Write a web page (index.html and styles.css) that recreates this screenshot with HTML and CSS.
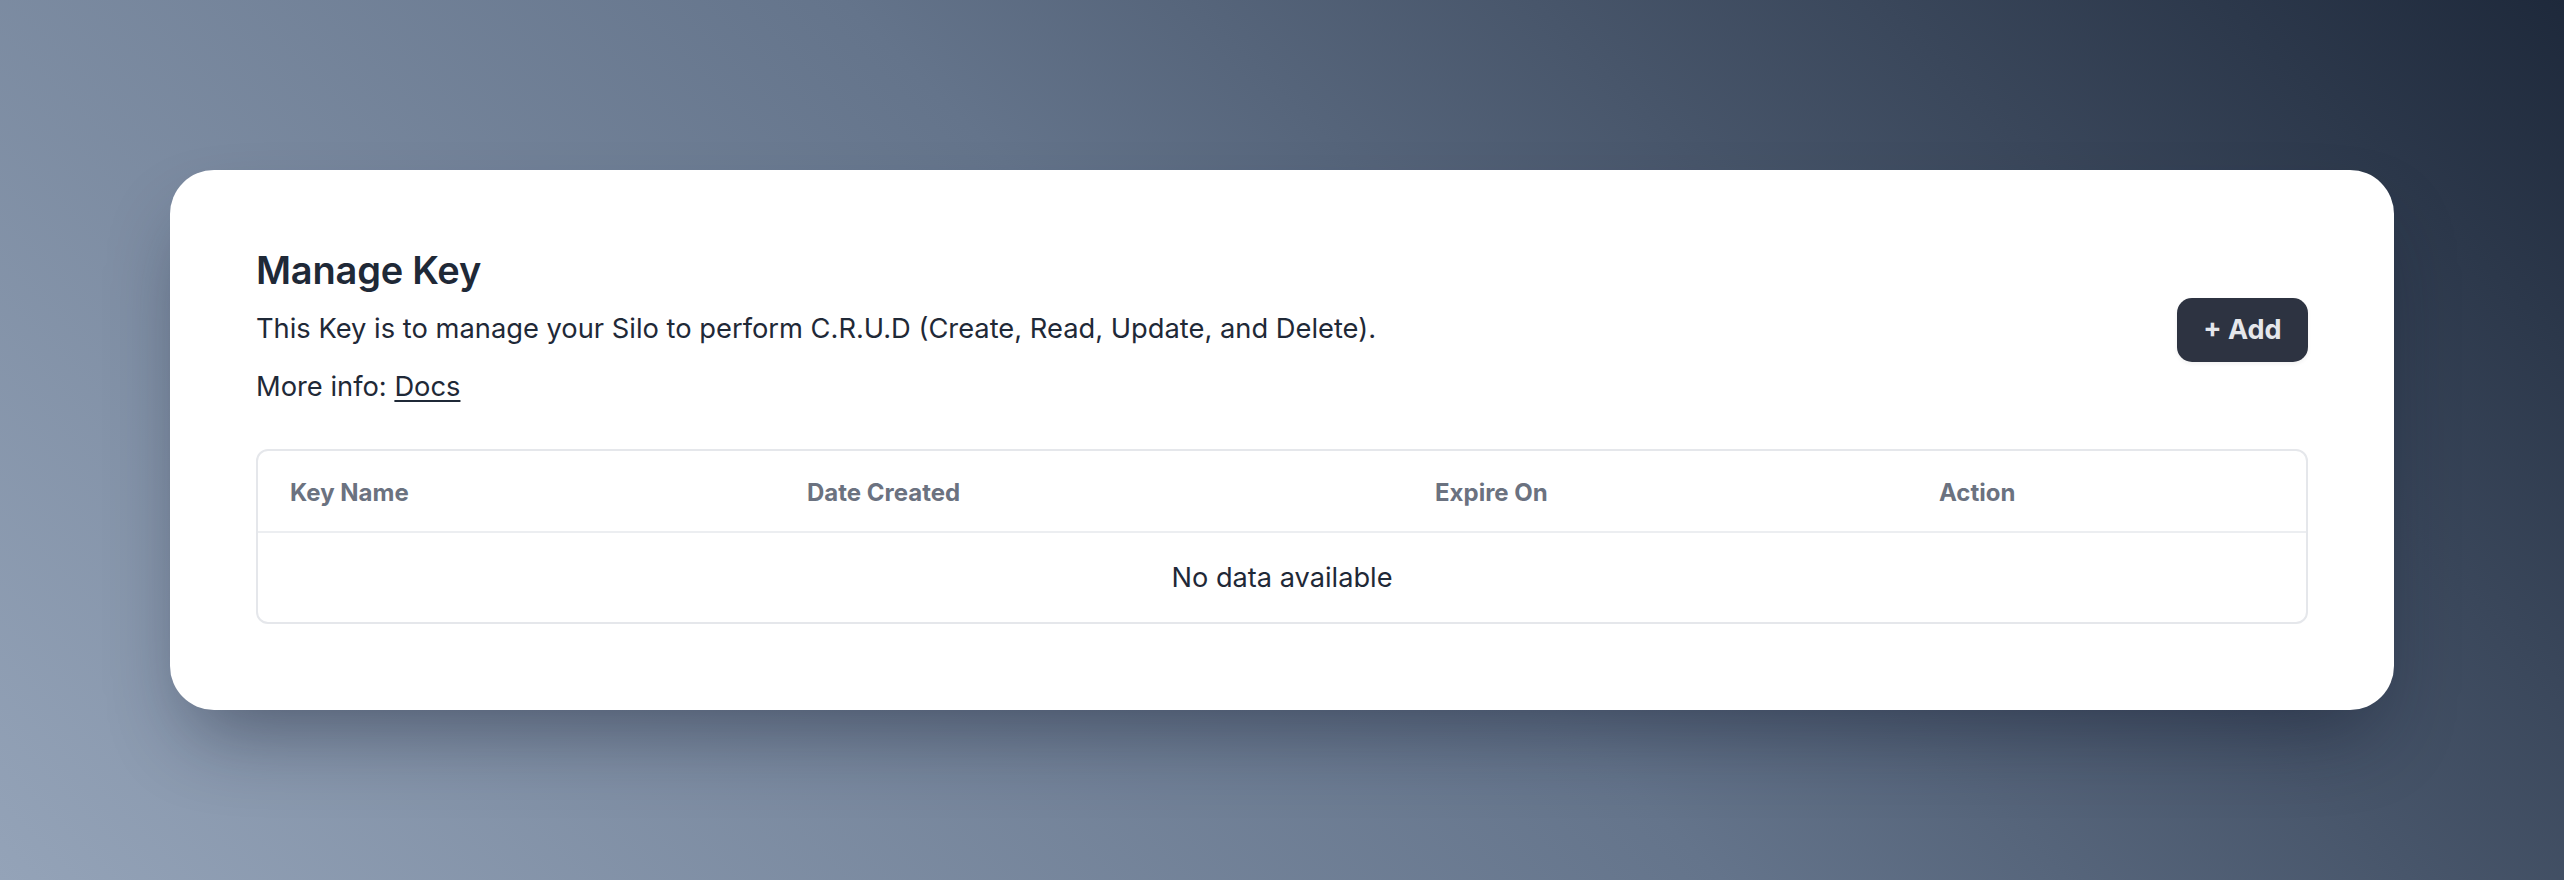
FILE: index.html
```html
<!DOCTYPE html>
<html lang="en">
<head>
<meta charset="utf-8">
<title>Manage Key</title>
<link rel="stylesheet" href="styles.css">
</head>
<body>
  <main class="card">
    <div class="card-head">
      <div class="intro">
        <h1 class="title">Manage Key</h1>
        <p class="desc">This Key is to manage your Silo to perform C.R.U.D (Create, Read, Update, and Delete).</p>
        <p class="desc desc-more">More info: <a class="link" href="#">Docs</a></p>
      </div>
      <button class="btn-add" type="button">+ Add</button>
    </div>
    <div class="table-wrap">
      <table class="keys">
        <colgroup>
          <col class="c1"><col class="c2"><col class="c3"><col class="c4">
        </colgroup>
        <thead>
          <tr>
            <th>Key Name</th>
            <th>Date Created</th>
            <th>Expire On</th>
            <th>Action</th>
          </tr>
        </thead>
        <tbody>
          <tr>
            <td class="empty" colspan="4">No data available</td>
          </tr>
        </tbody>
      </table>
    </div>
  </main>
</body>
</html>
```
FILE: styles.css
```css
* { box-sizing: border-box; }

html, body { margin: 0; padding: 0; }

body {
  min-height: 880px;
  padding: 0 170px;
  display: flex;
  align-items: center;
  font-family: Inter, "Noto Sans", sans-serif;
  color: #1f2937;
  background: linear-gradient(225deg, #1e293b 0%, #64748b 50%, #94a3b8 100%);
}

.card {
  width: 100%;
  height: 540px;
  background: #ffffff;
  border-radius: 44px;
  padding: 78px 86px 86px;
  box-shadow: 0 40px 80px -20px rgba(15, 23, 42, 0.45);
}

.card-head {
  display: flex;
  align-items: center;
  justify-content: space-between;
}

.title {
  margin: 0;
  font-size: 38px;
  line-height: 44px;
  font-weight: 600;
  color: #1f2937;
  letter-spacing: -0.2px;
}

.desc {
  margin: 19px 0 0;
  font-size: 27.3px;
  line-height: 36px;
  font-weight: 400;
  color: #1f2937;
}

.desc-more { margin-top: 22px; }

.link {
  color: #1f2937;
  text-decoration: underline;
  text-underline-offset: 4px;
  text-decoration-thickness: 2px;
}

.btn-add {
  width: 131px;
  height: 64px;
  margin-top: 6px;
  border: 0;
  border-radius: 15px;
  background: #2d3341;
  color: #e5e7eb;
  font-family: Inter, "Noto Sans", sans-serif;
  font-size: 27px;
  font-weight: 700;
  padding: 0;
  box-shadow: 0 2px 4px rgba(0,0,0,0.06);
}

.table-wrap {
  margin-top: 44px;
  border: 2px solid #e5e7eb;
  border-radius: 12px;
  overflow: hidden;
}

.keys {
  width: 100%;
  border-collapse: collapse;
  table-layout: fixed;
}

.c1 { width: 517px; }
.c2 { width: 628px; }
.c3 { width: 504px; }
.c4 { width: auto; }

.keys th {
  height: 81px;
  padding: 3px 32px 0;
  text-align: left;
  font-size: 24px;
  line-height: 30px;
  font-weight: 700;
  color: #6b7280;
  border-bottom: 2px solid #eceef1;
}

.keys td.empty {
  height: 90px;
  text-align: center;
  font-size: 27.2px;
  line-height: 36px;
  color: #1f2937;
}
```
